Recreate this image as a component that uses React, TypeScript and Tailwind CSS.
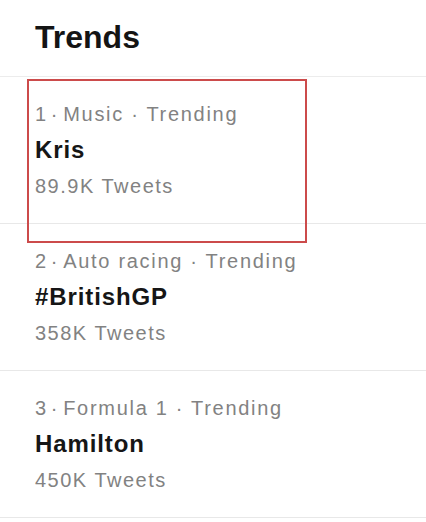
import React from "react";

const trends = [
  { rank: "1", rest: "Music · Trending", name: "Kris", count: "89.9K Tweets" },
  { rank: "2", rest: "Auto racing · Trending", name: "#BritishGP", count: "358K Tweets" },
  { rank: "3", rest: "Formula 1 · Trending", name: "Hamilton", count: "450K Tweets" },
];

export default function App() {
  return (
    <div
      className="relative w-[426px] h-[522px] bg-white overflow-hidden"
      style={{ fontFamily: '"Liberation Sans", Arial, sans-serif' }}
    >
      <div className="h-[77px] border-b border-[#ececec] pl-[35px] pt-[18px]">
        <h1 className="text-[32px] leading-[38px] font-bold text-[#141414]">Trends</h1>
      </div>
      {trends.map((t) => (
        <div key={t.name} className="h-[147px] border-b border-[#e8e8e8] pl-[35px] pt-[25px] flex flex-col">
          <div className="text-[20px] leading-[24px] tracking-[1.7px] text-[#828282]">
            <span>{t.rank}</span>
            <span className="ml-[3px] mr-[4px]">·</span>
            <span>{t.rest}</span>
          </div>
          <div className="mt-[10px] text-[24px] leading-[28px] font-bold tracking-[0.9px] text-[#161616]">{t.name}</div>
          <div className="mt-[10px] text-[20px] leading-[24px] tracking-[1.5px] text-[#828282]">{t.count}</div>
        </div>
      ))}
      <div className="absolute left-[27px] top-[79px] w-[280px] h-[164px] border-[2.5px] border-[#cc4b4b]" />
    </div>
  );
}
